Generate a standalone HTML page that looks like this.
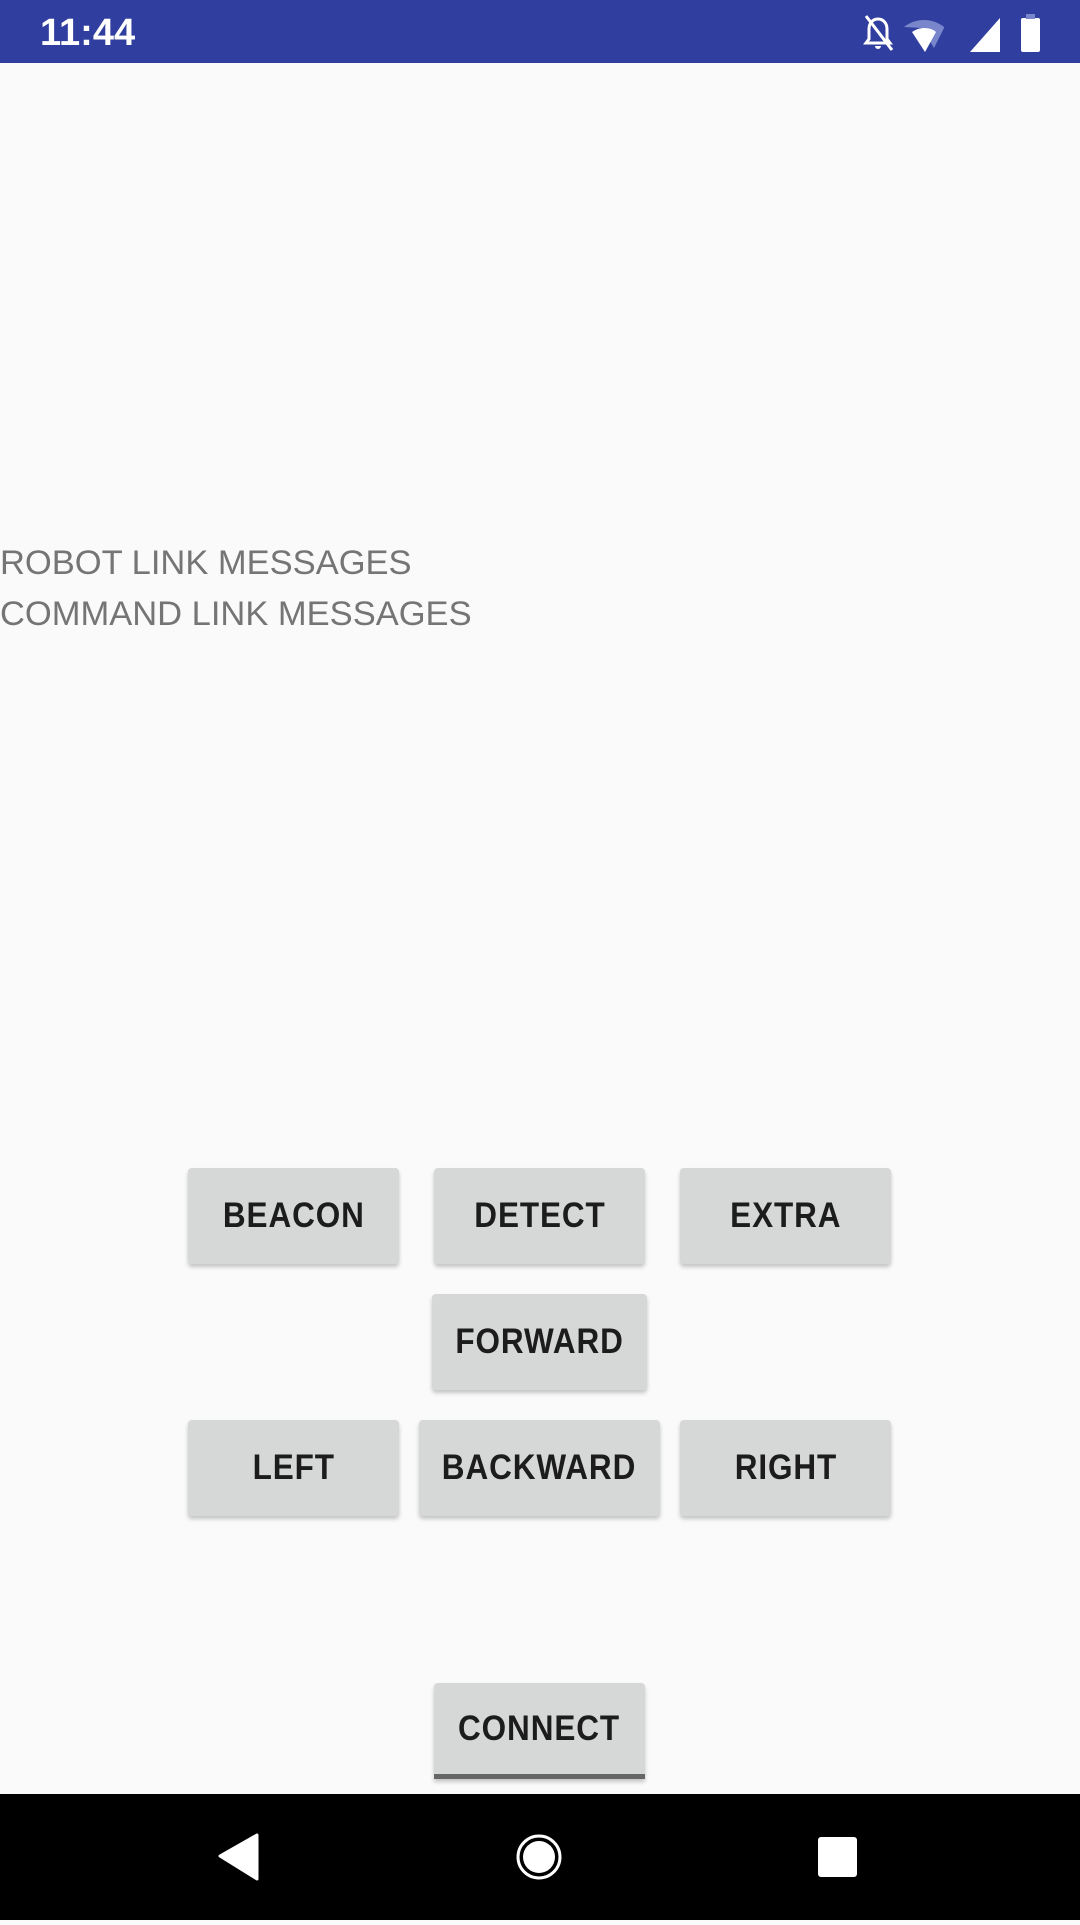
<!DOCTYPE html>
<html><head><meta charset="utf-8"><style>
html,body{margin:0;padding:0;width:1080px;height:1920px;overflow:hidden;background:#fafafa;font-family:"Liberation Sans",sans-serif;}
.sb{position:absolute;left:0;top:0;width:1080px;height:63px;background:#303f9f;}
.time{position:absolute;left:40px;top:12px;color:#fff;font-size:38px;font-weight:bold;}
.msg{position:absolute;left:0;color:#757575;font-size:34.5px;}
.btn{position:absolute;background:#d6d7d7;border-radius:4px;box-shadow:0 3px 4px rgba(0,0,0,0.22);color:#1c1c1c;font-size:35px;display:flex;align-items:center;justify-content:center;height:96px;}
.btn span{display:inline-block;transform:scaleX(0.9);font-weight:bold;letter-spacing:1px;}
.nav{position:absolute;left:0;top:1794px;width:1080px;height:126px;background:#000;}
</style></head><body>
<div class="sb">
<div class="time">11:44</div>
<svg style="position:absolute;left:860px;top:12px" width="190" height="42" viewBox="0 0 190 42">
<path d="M18 7c-5 0-9 4-9 10v10l-3 4h24l-3-4V17c0-6-4-10-9-10z" fill="none" stroke="#fff" stroke-width="3"/>
<path d="M15 34h6a3 3 0 0 1-6 0z" fill="#fff"/>
<line x1="6" y1="4" x2="32" y2="38" stroke="#fff" stroke-width="3"/>
<path d="M64 8c8 0 15 3 20 7L84 16 74 36 62 16 44 15c5-4 12-7 20-7z" fill="#7986cb"/>
<path d="M64 16c6 0 10 2 12 4L65 40 52 20c3-2 7-4 12-4z" fill="#fff"/>
<path d="M110 40L140 6V40z" fill="#fff"/>
<rect x="161" y="6" width="19" height="34" rx="2" fill="#fff"/>
<rect x="166" y="2" width="9" height="5" fill="#7986cb"/>
</svg>
</div>
<div class="msg" style="top:544px">ROBOT LINK MESSAGES</div>
<div class="msg" style="top:595px">COMMAND LINK MESSAGES</div>
<div class="btn" style="left:188px;top:1168px;width:211px"><span>BEACON</span></div>
<div class="btn" style="left:434px;top:1168px;width:211px"><span>DETECT</span></div>
<div class="btn" style="left:680px;top:1168px;width:211px"><span>EXTRA</span></div>
<div class="btn" style="left:432px;top:1294px;width:215px"><span>FORWARD</span></div>
<div class="btn" style="left:188px;top:1420px;width:211px"><span>LEFT</span></div>
<div class="btn" style="left:419px;top:1420px;width:241px"><span>BACKWARD</span></div>
<div class="btn" style="left:680px;top:1420px;width:211px"><span>RIGHT</span></div>
<div class="btn" style="left:434px;top:1683px;width:211px;border-radius:4px 4px 0 0;border-bottom:5px solid #666;height:91px"><span>CONNECT</span></div>
<div class="nav">
<svg width="1080" height="126" viewBox="0 0 1080 126">
<path d="M257 41V85L220 62z" fill="#fff" stroke="#fff" stroke-width="3" stroke-linejoin="round"/>
<circle cx="539" cy="63" r="21" fill="none" stroke="#fff" stroke-width="3"/>
<circle cx="539" cy="63" r="16" fill="#fff"/>
<rect x="818" y="43" width="39" height="40" rx="3" fill="#fff"/>
</svg>
</div>
</body></html>
